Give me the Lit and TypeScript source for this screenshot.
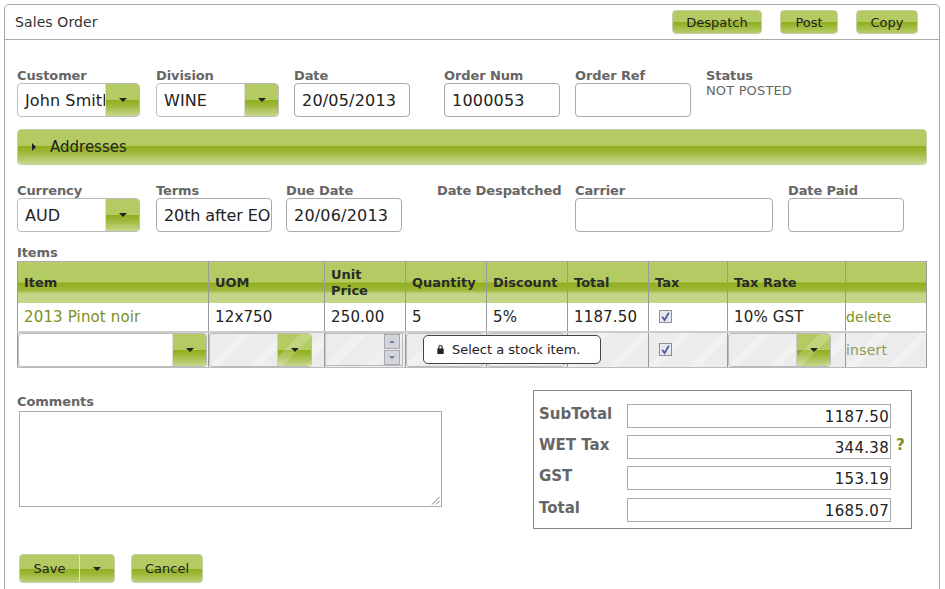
import { LitElement, html, css } from "lit";
import { customElement } from "lit/decorators.js";

const arrow = html`<i class="arrow"></i>`;
const combo = (value: string, cls = "") => html`<div class="combo ${cls}"><span class="val">${value}</span><span class="drop">${arrow}</span></div>`;
const box = (value: string, cls = "") => html`<div class="input ${cls}">${value}</div>`;
const field = (label: string, content: unknown) => html`<div class="field"><label>${label}</label>${content}</div>`;
const check = html`<span class="check"><svg viewBox="0 0 13 13" width="13" height="13"><rect x=".5" y=".5" width="12" height="12" fill="#e4e7f0" stroke="#8f8f9a"/><path d="M3.2 6.8 5.6 10 9.8 2.8" fill="none" stroke="#4a5f9c" stroke-width="1.8"/></svg></span>`;

@customElement("app-root")
export class AppRoot extends LitElement {
  static styles = css`
    :host { display: block; height: 589px; overflow: hidden; background: #fff; font-family: "DejaVu Sans", Verdana, sans-serif; color: #222; }
    * { box-sizing: border-box; }
    .card { margin: 4px 0 0 4px; width: 936px; height: 640px; border: 1px solid #aaa; border-radius: 5px 5px 0 0; }
    .head { height: 35px; border-bottom: 1px solid #aaa; display: flex; align-items: center; padding: 0 21px 0 10px; }
    .title { font-size: 14px; color: #333; flex: 1; letter-spacing: .1px; }
    .btn { height: 24px; border: 1px solid #c6cfa6; border-radius: 4px; font-size: 13px; color: #222; display: flex; align-items: center; justify-content: center;
      background: linear-gradient(#b3cb62 50%, #8fae1b 50%, #b6cc6c 100%); }
    .despatch { width: 90px; margin-right: 18px; }
    .post { width: 58px; margin-right: 18px; }
    .copy { width: 62px; }
    .body { padding: 29px 0 0 12px; }
    .row { display: grid; }
    .row1 { grid-template-columns: 139px 138px 150px 131px 131px auto; }
    .row2 { grid-template-columns: 139px 130px 151px 138px 213px auto; margin-top: 19px; }
    .field { display: flex; flex-direction: column; }
    label { display: block; font-size: 13px; font-weight: 700; color: #666; height: 14px; line-height: 13px; letter-spacing: -.1px; white-space: nowrap; }
    .input { height: 34px; width: 116px; border: 1px solid #aaa; border-radius: 4px; font-size: 16px; letter-spacing: .2px; line-height: 34px; padding: 0 7px; background: #fff; overflow: hidden; white-space: nowrap; color: #222; }
    .tight { letter-spacing: -.1px; }
    .wide { width: 198px; }
    .combo { height: 34px; display: flex; border: 1px solid #bbb; border-radius: 4px; overflow: hidden; background: #fff; width: 123px; }
    .val { flex: 1; min-width: 0; font-size: 16px; letter-spacing: .1px; line-height: 34px; padding-left: 7px; white-space: nowrap; overflow: hidden; }
    .drop { flex: none; width: 34px; display: flex; align-items: center; justify-content: center; border-left: 1px solid #ddd;
      background: linear-gradient(#b3cb62 50%, #8fae1b 50%, #a0bb40 70%, #c7d88f 100%); }
    .arrow { display: block; width: 0; height: 0; border: 4px solid transparent; border-top-color: #222; border-bottom: 0; }
    .status { font-size: 13px; letter-spacing: .15px; color: #666; line-height: 14px; margin-top: 1px; }
    .bar { width: 910px; height: 36px; margin-top: 12px; border: 1px solid #c6cfa6; border-radius: 4px; display: flex; align-items: center; padding-left: 14px; gap: 14px; font-size: 15px; color: #222;
      background: linear-gradient(#b3cb62 46%, #8fae1b 46%, #9db737 65%, #c7d88f 100%); }
    .tri { display: block; width: 0; height: 0; border: 4px solid transparent; border-left-color: #222; border-right: 0; }
    .items { margin-top: 14px; }
    .items label { height: 15px; line-height: 14px; }
    .tablewrap { position: relative; width: 909px; }
    table { border-collapse: collapse; table-layout: fixed; width: 909px; }
    col.c1 { width: 191px; } col.c2 { width: 116px; } col.c3, col.c4, col.c5, col.c6 { width: 81px; } col.c7 { width: 79px; } col.c8 { width: 118px; } col.c9 { width: 81px; }
    th { height: 41px; border: 1px solid #999; border-top-color: #aaa; border-bottom: 0; text-align: left; font-size: 13px; line-height: 16px; font-weight: 700; color: #2a2a2a; padding: 2px 6px 0;
      background: linear-gradient(#b3cb62 49%, #8fae1b 49%, #a0bb40 70%, #c3d586 75%, #c3d586 100%); }
    td { border-left: 1px solid #999; border-right: 1px solid #999; font-size: 15px; letter-spacing: .15px; padding: 0 6px; white-space: nowrap; height: 29px; overflow: hidden; }
    td.link { color: #7c8f22; padding-left: 0; font-size: 14px; letter-spacing: .2px; }
    td.green { color: #7c8f22; }
    td.c { padding-left: 10px; }
    .r2 td { height: 36px; padding: 0; border-top: 2px solid #ccc; border-bottom: 1px solid #bbb;
      background: repeating-linear-gradient(135deg, #ececec 0 22px, #f1f1f1 22px 30px); }
    .r2 td.c { padding-left: 10px; }
    .r2 td.link { color: #8c9a55; padding-left: 0; }
    .r2 .combo { width: 189px; }
    .r2 .combo.w { width: 103px; background: transparent; }
    .r2 .combo.dis .drop { background: repeating-linear-gradient(135deg, transparent 0 16px, rgba(255,255,255,.18) 16px 26px), linear-gradient(#b3cb62 50%, #8fae1b 50%, #a0bb40 70%, #c7d88f 100%); border-left-color: #ccc; }
    .r2 .input { width: 78px; background: transparent; height: 34px; border-color: #bbb; padding: 0; }
    .spin { width: 78px; height: 33px; border: 1px solid #bbb; border-left-color: #ccc; display: flex; justify-content: flex-end; align-items: center; }
    .spin div { width: 16px; height: 31px; margin-right: 2px; display: flex; flex-direction: column; gap: 1px; }
    .spin b { flex: 1; display: flex; align-items: center; justify-content: center; background: #d4d6dc; border: 1px solid #a8a8b0; }
    .spin i { display: block; width: 0; height: 0; border: 3px solid transparent; }
    .spin i.up { border-bottom-color: #6f7ea8; border-top: 0; }
    .spin i.dn { border-top-color: #6f7ea8; border-bottom: 0; }
    .check { display: block; height: 13px; }
    .check svg { display: block; }
    .tip { position: absolute; left: 406px; top: 74px; width: 178px; height: 29px; background: #fff; border: 1px solid #444; border-radius: 5px; font-size: 13px; color: #222; display: flex; align-items: center; gap: 7px; padding-left: 12px; white-space: nowrap; }
    .tip svg { display: block; }
    .lower { display: flex; margin-top: 22px; }
    .comments { width: 516px; padding-top: 5px; }
    .comments label { height: 16px; }
    .ta { margin-left: 2px; width: 423px; height: 96px; border: 1px solid #aaa; position: relative; background: #fff; }
    .grip { position: absolute; right: 1px; bottom: 1px; }
    .totals { width: 379px; height: 139px; border: 1px solid #888; display: grid; grid-template-columns: 83px 264px auto; column-gap: 5px; padding: 13px 0 0 5px; grid-auto-rows: 24px; row-gap: 7.2px; }
    .tl { font-size: 15px; font-weight: 700; color: #666; line-height: 18px; padding-top: 1px; white-space: nowrap; }
    .tv { border: 1px solid #aaa; font-size: 15px; letter-spacing: .3px; line-height: 24px; height: 24px; text-align: right; padding-right: 1px; color: #222; overflow: hidden; }
    .q { font-size: 15px; font-weight: 700; color: #7c8f22; line-height: 20px; }
    .actions { display: flex; margin-top: 25px; margin-left: 2px; }
    .actions .btn { height: 29px; background: linear-gradient(#b3cb62 50%, #8fae1b 50%, #a0bb40 75%, #c0d27c 100%); }
    .save { width: 96px; margin-right: 16px; justify-content: flex-start; overflow: hidden; }
    .save span { width: 60px; text-align: center; height: 100%; line-height: 27px; border-right: 1px solid #dfe8c0; }
    .save em { flex: 1; display: flex; justify-content: center; }
    .cancel { width: 72px; }
  `;

  render() {
    const nbsp = "\u00a0";
    return html`<div class="card">
      <div class="head">
        <div class="title">Sales Order</div>
        <div class="btn despatch">Despatch</div>
        <div class="btn post">Post</div>
        <div class="btn copy">Copy</div>
      </div>
      <div class="body">
        <div class="row row1">
          ${field("Customer", combo("John Smith"))}
          ${field("Division", combo("WINE"))}
          ${field("Date", box("20/05/2013"))}
          ${field("Order Num", box("1000053"))}
          ${field("Order Ref", box(nbsp))}
          ${field("Status", html`<div class="status">NOT POSTED</div>`)}
        </div>
        <div class="bar"><i class="tri"></i>Addresses</div>
        <div class="row row2">
          ${field("Currency", combo("AUD"))}
          ${field("Terms", box("20th after EOM", "tight"))}
          ${field("Due Date", box("20/06/2013"))}
          ${field("Date Despatched", nbsp)}
          ${field("Carrier", box(nbsp, "wide"))}
          ${field("Date Paid", box(nbsp))}
        </div>
        <div class="items">
          <label>Items</label>
          <div class="tablewrap">
            <table>
              <colgroup><col class="c1"><col class="c2"><col class="c3"><col class="c4"><col class="c5"><col class="c6"><col class="c7"><col class="c8"><col class="c9"></colgroup>
              <thead><tr>
                <th>Item</th><th>UOM</th><th>Unit<br>Price</th><th>Quantity</th><th>Discount</th><th>Total</th><th>Tax</th><th>Tax Rate</th><th></th>
              </tr></thead>
              <tbody>
                <tr>
                  <td class="green">2013 Pinot noir</td><td>12x750</td><td>250.00</td><td>5</td><td>5%</td><td>1187.50</td><td class="c">${check}</td><td>10% GST</td><td class="link">delete</td>
                </tr>
                <tr class="r2">
                  <td>${combo("")}</td>
                  <td>${combo("", "w dis")}</td>
                  <td><div class="spin"><div><b><i class="up"></i></b><b><i class="dn"></i></b></div></div></td>
                  <td>${box("")}</td>
                  <td>${box("")}</td>
                  <td></td>
                  <td class="c">${check}</td>
                  <td>${combo("", "w dis")}</td>
                  <td class="link">insert</td>
                </tr>
              </tbody>
            </table>
            <div class="tip">
              <svg viewBox="0 0 10 12" width="9" height="11"><path d="M2.5 5V3.4a2.5 2.5 0 0 1 5 0V5h1v6h-7V5zM3.8 5h2.4V3.4a1.2 1.2 0 0 0-2.4 0z" fill="#222"/></svg>
              Select a stock item.
            </div>
          </div>
        </div>
        <div class="lower">
          <div class="comments">
            <label>Comments</label>
            <div class="ta"><svg class="grip" width="9" height="9" viewBox="0 0 9 9"><path d="M8.5 1 1 8.5M8.5 5 5 8.5" stroke="#777" fill="none"/></svg></div>
          </div>
          <div class="totals">
            <div class="tl">SubTotal</div><div class="tv">1187.50</div><div></div>
            <div class="tl">WET Tax</div><div class="tv">344.38</div><div class="q">?</div>
            <div class="tl">GST</div><div class="tv">153.19</div><div></div>
            <div class="tl">Total</div><div class="tv">1685.07</div><div></div>
          </div>
        </div>
        <div class="actions">
          <div class="btn save"><span>Save</span><em>${arrow}</em></div>
          <div class="btn cancel">Cancel</div>
        </div>
      </div>
    </div>`;
  }
}
